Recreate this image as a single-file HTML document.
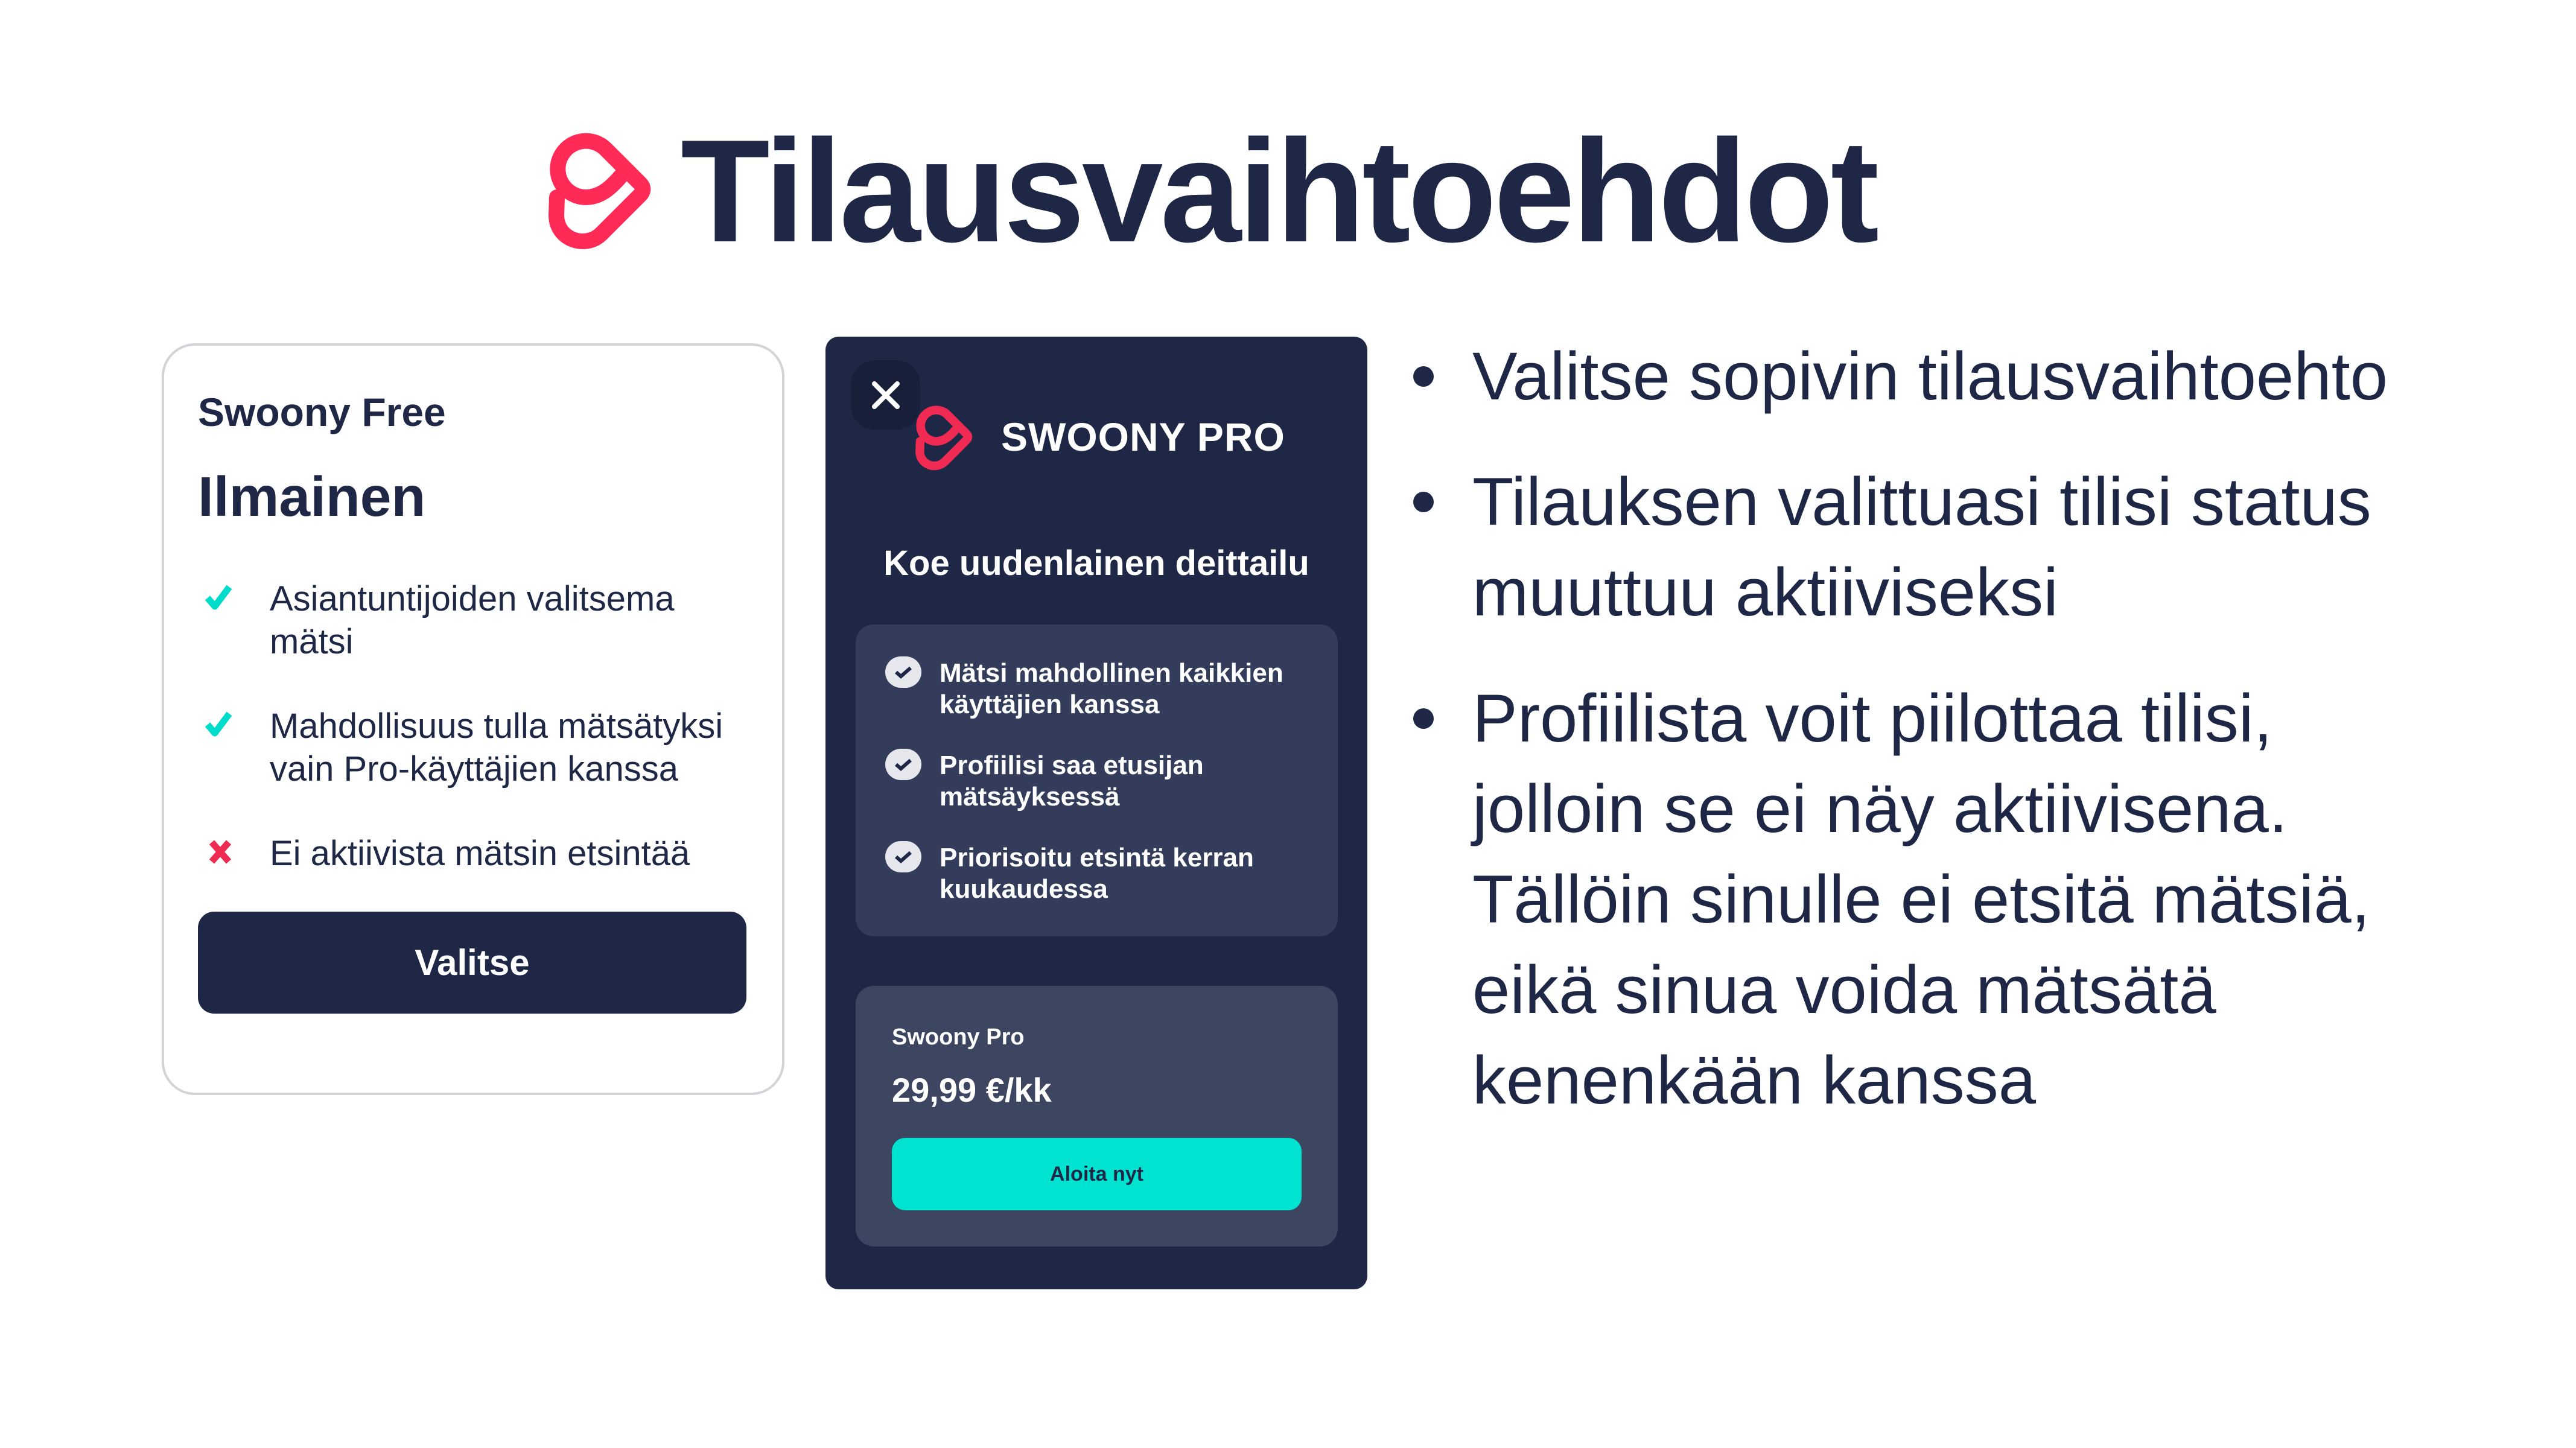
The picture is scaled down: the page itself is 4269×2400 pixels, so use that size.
<!DOCTYPE html>
<html><head><meta charset="utf-8"><style>
*{margin:0;padding:0;box-sizing:border-box}
body{width:4269px;height:2400px;background:#fff;position:relative;overflow:hidden;font-family:"Liberation Sans",sans-serif;color:#1e2846}
.a{position:absolute;white-space:nowrap}
.title{left:1128px;top:196px;font-size:242px;font-weight:bold;letter-spacing:-5px;line-height:1;color:#1e2846}
.card{left:268px;top:569px;width:1032px;height:1246px;border:4px solid #d4d4d8;border-radius:55px}
.li{font-size:58px;line-height:71px;color:#1e2846}
.dark{left:1368px;top:558px;width:898px;height:1579px;background:#1e2846;border-radius:22px}
.box{position:absolute;left:50px;width:799px;border-radius:30px}
.ft{position:absolute;left:139px;font-size:44px;font-weight:bold;line-height:52px;color:#fff}
.chk{position:absolute;left:49px;width:60px;height:52px;border-radius:30px;background:#e6e8ee}
.bt{font-size:112px;line-height:150px;color:#1e2846}
.dot{position:absolute;left:2342px;width:34px;height:34px;border-radius:50%;background:#1e2846}
</style></head><body>
<svg class="a" style="left:907px;top:217px" width="180" height="200" viewBox="80 110 540 600">
<path d="M450,330 C390,400 340,440 270,440 A140,140 0 1 1 370,200 L540,370 Q570,400 540,430 L350,620 C270,700 125,650 125,530 L128,440" fill="none" stroke="#ff2a55" stroke-width="78" stroke-linecap="round" stroke-linejoin="round"/>
</svg>
<div class="a title">Tilausvaihtoehdot</div>

<div class="a card"></div>
<div class="a" style="left:328px;top:645px;font-size:66px;font-weight:bold">Swoony Free</div>
<div class="a" style="left:328px;top:770px;font-size:93px;font-weight:bold">Ilmainen</div>
<svg class="a" style="left:338px;top:965px" width="48" height="50" viewBox="0 0 48 50"><path d="M6,26 L18,40 L42,8" fill="none" stroke="#00dccc" stroke-width="11" stroke-linejoin="round"/></svg>
<div class="a li" style="left:447px;top:957px">Asiantuntijoiden valitsema<br>mätsi</div>
<svg class="a" style="left:338px;top:1175px" width="48" height="50" viewBox="0 0 48 50"><path d="M6,26 L18,40 L42,8" fill="none" stroke="#00dccc" stroke-width="11" stroke-linejoin="round"/></svg>
<div class="a li" style="left:447px;top:1168px">Mahdollisuus tulla mätsätyksi<br>vain Pro-käyttäjien kanssa</div>
<svg class="a" style="left:345px;top:1390px" width="40" height="44" viewBox="0 0 40 44"><path d="M6,6 L34,38 M34,6 L6,38" stroke="#ee2c52" stroke-width="11"/></svg>
<div class="a li" style="left:447px;top:1379px">Ei aktiivista mätsin etsintää</div>
<div class="a" style="left:328px;top:1511px;width:909px;height:169px;background:#1e2846;border-radius:27px;color:#fff;font-size:60px;font-weight:bold;text-align:center;line-height:169px">Valitse</div>

<div class="a dark">
 <div style="position:absolute;left:42px;top:39px;width:115px;height:115px;background:#172038;border-radius:40px"></div>
 <svg style="position:absolute;left:75px;top:72px" width="50" height="50" viewBox="0 0 50 50"><path d="M6,6 L44,44 M44,6 L6,44" stroke="#fff" stroke-width="8" stroke-linecap="round"/></svg>
 <svg style="position:absolute;left:148px;top:112px" width="100" height="112" viewBox="80 110 540 600"><path d="M450,330 C390,400 340,440 270,440 A140,140 0 1 1 370,200 L540,370 Q570,400 540,430 L350,620 C270,700 125,650 125,530 L128,440" fill="none" stroke="#f02a52" stroke-width="78" stroke-linecap="round" stroke-linejoin="round"/></svg>
 <div style="position:absolute;left:291px;top:128px;font-size:66px;font-weight:bold;letter-spacing:1px;color:#fff;white-space:nowrap">SWOONY PRO</div>
 <div style="position:absolute;left:0;width:898px;top:342px;text-align:center;font-size:58px;font-weight:bold;color:#fff">Koe uudenlainen deittailu</div>
 <div class="box" style="top:477px;height:517px;background:#333c5a">
  <div class="chk" style="top:53px"></div><svg style="position:absolute;left:63px;top:66px" width="32" height="26" viewBox="0 0 32 26"><path d="M4,13 L12,20 L28,6" fill="none" stroke="#1e2846" stroke-width="6"/></svg>
  <div class="ft" style="top:55px">Mätsi mahdollinen kaikkien<br>käyttäjien kanssa</div>
  <div class="chk" style="top:206px"></div><svg style="position:absolute;left:63px;top:219px" width="32" height="26" viewBox="0 0 32 26"><path d="M4,13 L12,20 L28,6" fill="none" stroke="#1e2846" stroke-width="6"/></svg>
  <div class="ft" style="top:208px">Profiilisi saa etusijan<br>mätsäyksessä</div>
  <div class="chk" style="top:359px"></div><svg style="position:absolute;left:63px;top:372px" width="32" height="26" viewBox="0 0 32 26"><path d="M4,13 L12,20 L28,6" fill="none" stroke="#1e2846" stroke-width="6"/></svg>
  <div class="ft" style="top:361px">Priorisoitu etsintä kerran<br>kuukaudessa</div>
 </div>
 <div class="box" style="top:1076px;height:432px;background:#3d4661">
  <div style="position:absolute;left:60px;top:64px;font-size:38px;font-weight:bold;color:#fff">Swoony Pro</div>
  <div style="position:absolute;left:60px;top:140px;font-size:56px;font-weight:bold;color:#fff">29,99 €/kk</div>
  <div style="position:absolute;left:60px;top:252px;width:679px;height:120px;background:#00e3d0;border-radius:22px;text-align:center;line-height:120px;font-size:34px;font-weight:bold;color:#1e2846">Aloita nyt</div>
 </div>
</div>

<div class="dot" style="top:607px"></div>
<div class="a bt" style="left:2440px;top:549px">Valitse sopivin tilausvaihtoehto</div>
<div class="dot" style="top:815px"></div>
<div class="a bt" style="left:2440px;top:757px">Tilauksen valittuasi tilisi status<br>muuttuu aktiiviseksi</div>
<div class="dot" style="top:1174px"></div>
<div class="a bt" style="left:2440px;top:1116px">Profiilista voit piilottaa tilisi,<br>jolloin se ei näy aktiivisena.<br>Tällöin sinulle ei etsitä mätsiä,<br>eikä sinua voida mätsätä<br>kenenkään kanssa</div>
</body></html>
